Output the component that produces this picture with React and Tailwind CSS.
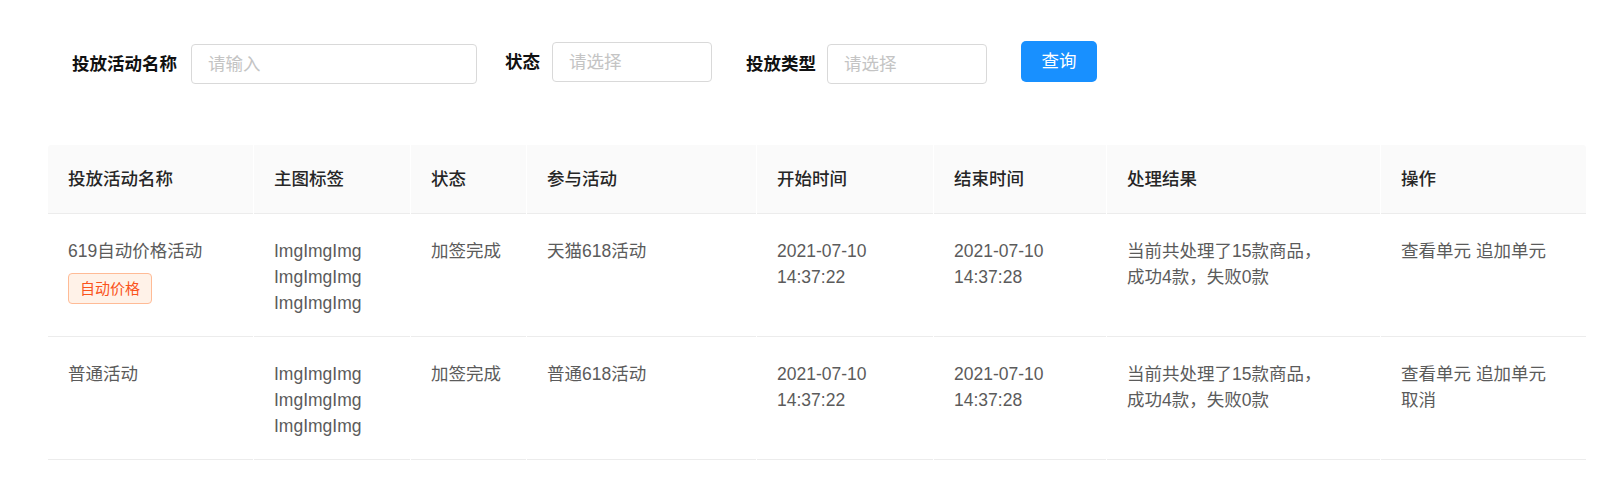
import React from "react";

const columns = [
  { title: "投放活动名称", width: "w-[205px]" },
  { title: "主图标签", width: "w-[156px]" },
  { title: "状态", width: "w-[115px]" },
  { title: "参与活动", width: "w-[229px]" },
  { title: "开始时间", width: "w-[176px]" },
  { title: "结束时间", width: "w-[172px]" },
  { title: "处理结果", width: "w-[273px]" },
  { title: "操作", width: "w-[205px]" },
];

const rows = [
  {
    name: "619自动价格活动",
    tag: "自动价格",
    status: "加签完成",
    activity: "天猫618活动",
    start: ["2021-07-10", "14:37:22"],
    end: ["2021-07-10", "14:37:28"],
    result: ["当前共处理了15款商品，", "成功4款，失败0款"],
    actions: [["查看单元", "追加单元"]],
  },
  {
    name: "普通活动",
    status: "加签完成",
    activity: "普通618活动",
    start: ["2021-07-10", "14:37:22"],
    end: ["2021-07-10", "14:37:28"],
    result: ["当前共处理了15款商品，", "成功4款，失败0款"],
    actions: [["查看单元", "追加单元"], ["取消"]],
  },
];

const Lines = ({ items }) => (
  <>
    {items.map((line, i) => (
      <div key={i} className="whitespace-nowrap">
        {line}
      </div>
    ))}
  </>
);

const BodyCell = ({ width, children }) => (
  <div className={`${width} shrink-0 border-b border-[#ececec] pl-5 pr-2 pt-6 pb-5`}>
    {children}
  </div>
);

export default function App() {
  return (
    <div className="min-h-[492px] bg-white font-['Liberation_Sans','Noto_Sans_CJK_SC',sans-serif] text-[17.5px]">
      {/* Filters */}
      <div className="flex items-start pl-[72px] pt-[41px]">
        <div className="mt-[3px] flex items-center">
          <span className="w-[106px] font-semibold text-[#111] whitespace-nowrap">投放活动名称</span>
          <input
            readOnly
            placeholder="请输入"
            className="ml-[13px] h-[40px] w-[286px] rounded-[4px] border border-[#d9d9d9] px-4 outline-none placeholder:text-[#c4c4c4]"
          />
        </div>
        <div className="ml-[28px] mt-[1px] flex items-center">
          <span className="w-[35px] font-semibold text-[#111] whitespace-nowrap">状态</span>
          <input
            readOnly
            placeholder="请选择"
            className="ml-[12px] h-[40px] w-[160px] rounded-[4px] border border-[#d9d9d9] px-4 outline-none placeholder:text-[#c4c4c4]"
          />
        </div>
        <div className="ml-[34px] mt-[3px] flex items-center">
          <span className="w-[70px] font-semibold text-[#111] whitespace-nowrap">投放类型</span>
          <input
            readOnly
            placeholder="请选择"
            className="ml-[11px] h-[40px] w-[160px] rounded-[4px] border border-[#d9d9d9] px-4 outline-none placeholder:text-[#c4c4c4]"
          />
        </div>
        <button className="ml-[34px] h-[41px] w-[76px] rounded-[5px] bg-[#1890ff] text-white">
          查询
        </button>
      </div>

      {/* Table */}
      <div className="ml-[48px] mt-[61px] w-[1538px] leading-[26px]">
        <div className="flex gap-px">
          {columns.map((col, i) => (
            <div
              key={col.title}
              className={`${col.width} shrink-0 h-[69px] flex items-center border-b border-[#ececec] bg-[#fafafa] pl-5 font-medium text-[#262626] ${
                i === 0 ? "rounded-tl-[3px]" : ""
              } ${i === columns.length - 1 ? "rounded-tr-[3px]" : ""}`}
            >
              {col.title}
            </div>
          ))}
        </div>

        {rows.map((row, r) => (
          <div key={r} className="flex gap-px text-[#5b5b5b]">
            <BodyCell width={columns[0].width}>
              <div className="whitespace-nowrap">{row.name}</div>
              {row.tag && (
                <span className="mt-[9px] inline-flex h-[31px] items-center rounded-[4px] border border-[#ffbb96] bg-[#fff2e8] px-[11px] text-[15px] text-[#fa541c]">
                  {row.tag}
                </span>
              )}
            </BodyCell>
            <BodyCell width={columns[1].width}>
              <Lines items={["ImgImgImg", "ImgImgImg", "ImgImgImg"]} />
            </BodyCell>
            <BodyCell width={columns[2].width}>{row.status}</BodyCell>
            <BodyCell width={columns[3].width}>{row.activity}</BodyCell>
            <BodyCell width={columns[4].width}>
              <Lines items={row.start} />
            </BodyCell>
            <BodyCell width={columns[5].width}>
              <Lines items={row.end} />
            </BodyCell>
            <BodyCell width={columns[6].width}>
              <Lines items={row.result} />
            </BodyCell>
            <BodyCell width={columns[7].width}>
              {row.actions.map((line, i) => (
                <div key={i} className="flex gap-[5px] whitespace-nowrap">
                  {line.map((a) => (
                    <span key={a} className="cursor-pointer">
                      {a}
                    </span>
                  ))}
                </div>
              ))}
            </BodyCell>
          </div>
        ))}
      </div>
    </div>
  );
}
